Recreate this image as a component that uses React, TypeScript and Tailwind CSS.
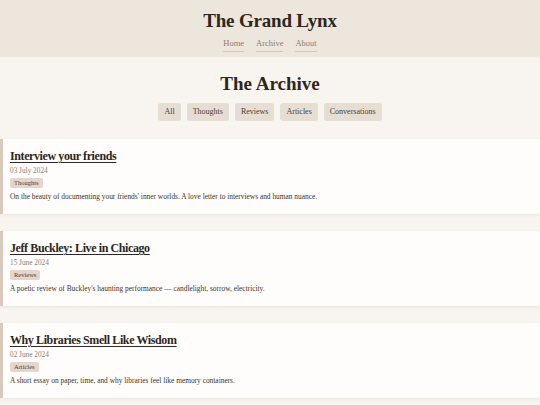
const filters = ["All", "Thoughts", "Reviews", "Articles", "Conversations"];

const posts = [
  {
    title: "Interview your friends",
    date: "03 July 2024",
    tag: "Thoughts",
    text: "On the beauty of documenting your friends' inner worlds. A love letter to interviews and human nuance.",
  },
  {
    title: "Jeff Buckley: Live in Chicago",
    date: "15 June 2024",
    tag: "Reviews",
    text: "A poetic review of Buckley's haunting performance — candlelight, sorrow, electricity.",
  },
  {
    title: "Why Libraries Smell Like Wisdom",
    date: "02 June 2024",
    tag: "Articles",
    text: "A short essay on paper, time, and why libraries feel like memory containers.",
  },
];

export default function App() {
  return (
    <div
      className="min-h-screen w-[540px] bg-[#f8f5f0] text-[#2e2620]"
      style={{ fontFamily: '"Liberation Serif", "DejaVu Serif", serif' }}
    >
      {/* Header */}
      <header className="flex h-[57px] flex-col items-center bg-[#ece6dd] pt-[9px]">
        <h1 className="text-[19px] font-bold leading-[24px] tracking-[-0.2px]">The Grand Lynx</h1>
        <nav className="mt-[4px] flex gap-[12px] text-[8.5px] text-[#8c7c72]">
          <a className="border-b border-[#d4c8bd] pb-[1px]">Home</a>
          <a className="border-b border-[#d4c8bd] pb-[1px]">Archive</a>
          <a className="border-b border-[#d4c8bd] pb-[1px]">About</a>
        </nav>
      </header>

      {/* Archive */}
      <main className="flex flex-col items-center pt-[15px]">
        <h2 className="text-[19px] font-bold leading-[24px]">The Archive</h2>
        <div className="mt-[7px] flex gap-[6px]">
          {filters.map((f) => (
            <button
              key={f}
              className="h-[18px] rounded-[3px] bg-[#e6ddd3] px-[6px] text-[8px] text-[#4a3f38]"
            >
              {f}
            </button>
          ))}
        </div>

        <div className="mt-[18px] flex w-full flex-col gap-[17px]">
          {posts.map((p) => (
            <article
              key={p.title}
              className="h-[75px] border-l-[3px] border-[#d7c9bc] bg-[#fffdfb] pl-[7px] pt-[10px] shadow-[0_1px_3px_rgba(120,100,80,0.12)]"
            >
              <h3 className="text-[12px] font-bold leading-[15px] tracking-[-0.4px] underline decoration-[1px] underline-offset-[2px]">
                {p.title}
              </h3>
              <div className="mt-[2px] text-[7.3px] leading-[9px] text-[#8b7f76]">{p.date}</div>
              <div className="mt-[3px] w-fit rounded-[2px] bg-[#e5d5ca] px-[4px] text-[6.5px] leading-[10px] text-[#4a3f38]">
                {p.tag}
              </div>
              <p className="mt-[4px] text-[7.4px] leading-[10px] text-[#3b322c]">{p.text}</p>
            </article>
          ))}
        </div>
      </main>
    </div>
  );
}
